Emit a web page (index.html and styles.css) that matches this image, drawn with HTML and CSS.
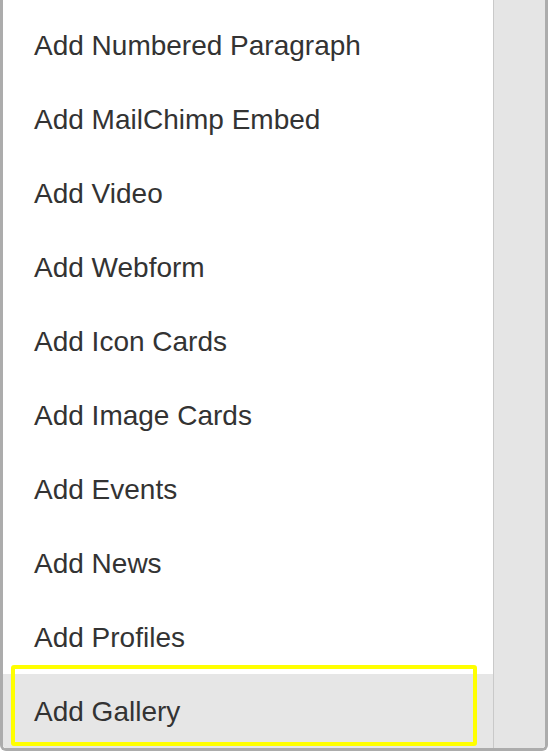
FILE: index.html
```html
<!DOCTYPE html>
<html lang="en">
<head>
<meta charset="UTF-8">
<title>Add block</title>
<link rel="stylesheet" href="styles.css">
</head>
<body>
<div class="frame">
  <ul class="menu">
    <li>Add Numbered Paragraph</li>
    <li>Add MailChimp Embed</li>
    <li>Add Video</li>
    <li>Add Webform</li>
    <li>Add Icon Cards</li>
    <li>Add Image Cards</li>
    <li>Add Events</li>
    <li>Add News</li>
    <li>Add Profiles</li>
    <li class="active">Add Gallery<span class="mark"></span></li>
  </ul>
  <div class="scroll"></div>
</div>
</body>
</html>
```

FILE: styles.css
```css
body{margin:0;background:#fff;font-family:"Helvetica Neue",Helvetica,"Liberation Sans",Arial,sans-serif}
.frame{display:flex;width:542px;height:748px;border:3px solid #acacac;border-top:none;border-radius:0 0 6px 6px;overflow:hidden}
.menu{list-style:none;margin:0;padding:8px 0 0;width:490px;background:#fff;border-right:1px solid #c9c9c9}
.menu li{position:relative;height:73px;padding:1px 0 0 31px;line-height:74px;font-size:28px;color:#333}
.menu li.active{background:#e6e6e6}
.scroll{flex:1;background:#e5e5e5}

/* yellow annotation box */
.mark{position:absolute;left:8px;top:-9px;width:458px;height:73px;border:4px solid #ffff00;border-radius:3px}
```
